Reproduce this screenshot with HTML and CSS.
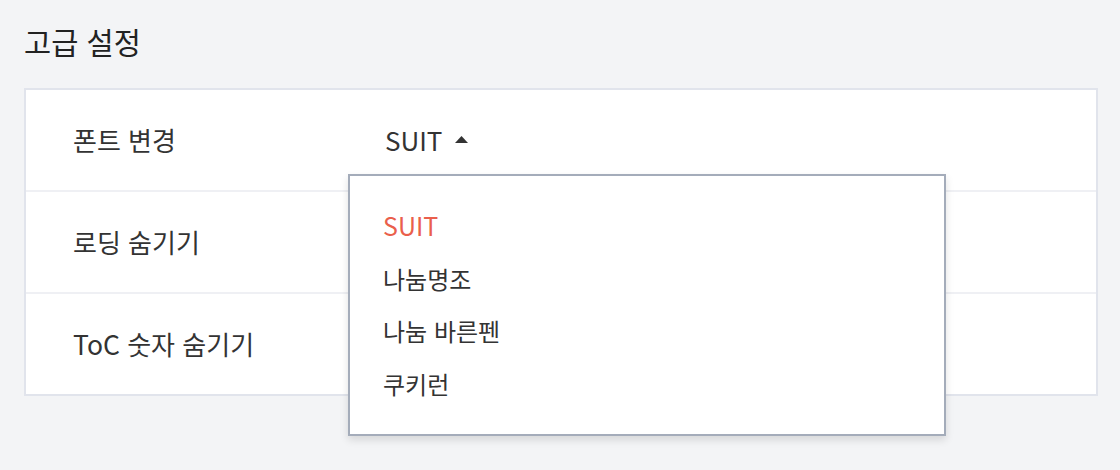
FILE: index.html
```html
<!DOCTYPE html>
<html lang="ko">
<head>
<meta charset="utf-8">
<link rel="stylesheet" href="styles.css">
</head>
<body>
<div class="page">
  <h2 class="title">고급 설정</h2>
  <div class="card">
    <div class="row">
      <div class="label">폰트 변경</div>
      <div class="value">
        <div class="select">
          <span class="latin">SUIT</span>
          <svg class="caret" width="13" height="7" viewBox="0 0 13 7"><path d="M0 7 L6.5 0 L13 7 Z" fill="#333"/></svg>
        </div>
        <ul class="menu">
          <li class="item active"><span class="latin">SUIT</span></li>
          <li class="item">나눔명조</li>
          <li class="item">나눔 바른펜</li>
          <li class="item">쿠키런</li>
        </ul>
      </div>
    </div>
    <div class="row">
      <div class="label">로딩 숨기기</div>
      <div class="value"></div>
    </div>
    <div class="row">
      <div class="label"><span class="latin-s">ToC</span> 숫자 숨기기</div>
      <div class="value"></div>
    </div>
  </div>
</div>
</body>
</html>
```

FILE: styles.css
```css
html, body {
  margin: 0;
  padding: 0;
  background: #f3f4f6;
}
body {
  font-family: "Noto Sans CJK KR", "Noto Sans", sans-serif;
  color: #333;
}
.page {
  min-height: 470px;
  box-sizing: border-box;
  padding: 21px 22px 0 24px;
}
.title {
  margin: 0;
  font-size: 29.5px;
  font-weight: 400;
  line-height: 40px;
  color: #222;
}
.card {
  margin-top: 27px;
  background: #fff;
  border: 2px solid #e1e4ec;
  display: flex;
  flex-direction: column;
}
.row {
  height: 100px;
  display: flex;
  align-items: center;
  padding-left: 47px;
  border-top: 2px solid #eff0f4;
}
.row:first-child {
  border-top: none;
}
.label {
  width: 312px;
  font-size: 26px;
  line-height: 36px;
  color: #333;
}
.latin-s {
  font-size: 26.5px;
}
.value {
  position: relative;
  flex: 1;
  height: 36px;
}
.select {
  display: flex;
  align-items: center;
  gap: 13px;
  height: 36px;
}
.latin {
  font-size: 26px;
  line-height: 36px;
  color: #333;
}
.caret {
  display: block;
  margin-top: -1px;
}
.menu {
  position: absolute;
  left: -37px;
  top: 52px;
  width: 598px;
  height: 262px;
  margin: 0;
  padding: 23px 0 24px 33px;
  box-sizing: border-box;
  list-style: none;
  background: #fff;
  border: 2px solid #a4acba;
  box-shadow: 0 4px 8px rgba(0, 0, 0, 0.12);
  z-index: 5;
}
.item {
  height: 52.7px;
  display: flex;
  align-items: center;
  font-size: 24px;
  color: #333;
}
.item.active .latin {
  color: #ea5f4c;
  font-size: 25px;
}
```
